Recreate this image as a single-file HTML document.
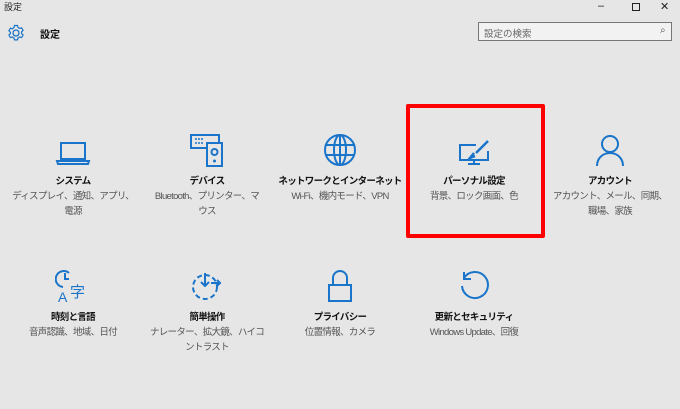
<!DOCTYPE html>
<html><head><meta charset="utf-8"><style>
body{margin:0;width:680px;height:409px;background:#e6e6e6;font-family:"Liberation Sans","Noto Sans CJK JP",sans-serif;position:relative;overflow:hidden;}
.a{position:absolute}
.item{position:absolute;width:134px;text-align:center;white-space:nowrap;letter-spacing:-0.7px}
.item svg{display:block;margin:0 auto;}
.t{font-size:9.5px;color:#111;margin-top:8px;line-height:14px;font-weight:bold}
.s{font-size:9.5px;color:#555;line-height:15px;}
</style></head><body>
<div class="a" style="left:4px;top:0px;font-size:9px;color:#222">設定</div>
<div class="a" style="left:598px;top:0px;font-size:11px;color:#222">–</div>
<div class="a" style="left:632px;top:3px;width:6px;height:6px;border:1px solid #222"></div>
<div class="a" style="left:660px;top:0px;font-size:11px;color:#222">✕</div>
<svg class="a" style="left:7px;top:24px" width="18" height="18" viewBox="0 0 18 18"><circle cx="9" cy="9" r="3" fill="none" stroke="#1a74c9" stroke-width="1.3"/><path d="M7.5 1.5h3l.5 2 1.6.9 2-.6 1.5 2.6-1.5 1.4v1.8l1.5 1.4-1.5 2.6-2-.6-1.6.9-.5 2h-3l-.5-2-1.6-.9-2 .6-1.5-2.6 1.5-1.4V8.2L1.9 6.8l1.5-2.6 2 .6L7 3.5z" fill="none" stroke="#1a74c9" stroke-width="1.2"/></svg>
<div class="a" style="left:40px;top:26px;font-size:10px;font-weight:bold;color:#111">設定</div>
<div class="a" style="left:478px;top:22px;width:194px;height:19px;border:1px solid #777;background:#f2f2f2;box-sizing:border-box"></div>
<div class="a" style="left:484px;top:26px;font-size:9.5px;color:#666">設定の検索</div>
<div class="a" style="left:660px;top:25px;font-size:10px;color:#555">⌕</div>

<div class="item" style="left:6px;top:137px"><svg width="36" height="30" viewBox="0 0 36 30"><path d="M6 6h24v16H6z M2 24h32l-1 3H3z" fill="none" stroke="#1a74c9" stroke-width="2"/></svg><div class="t">システム</div><div class="s">ディスプレイ、通知、アプリ、<br>電源</div></div>
<div class="item" style="left:140px;top:133px"><svg width="36" height="34" viewBox="0 0 36 34"><rect x="2" y="2" width="28" height="13" fill="none" stroke="#1a74c9" stroke-width="2"/><rect x="18" y="10" width="15" height="23" fill="#e6e6e6" stroke="#1a74c9" stroke-width="2"/><circle cx="25.5" cy="19" r="3" fill="none" stroke="#1a74c9" stroke-width="2"/><circle cx="25.5" cy="28" r="1.5" fill="#1a74c9"/><path d="M6 6h9M6 10h8" stroke="#1a74c9" stroke-width="1.5" stroke-dasharray="2 1"/></svg><div class="t">デバイス</div><div class="s">Bluetooth、プリンター、マ<br>ウス</div></div>
<div class="item" style="left:273px;top:133px"><svg width="36" height="34" viewBox="0 0 36 34"><circle cx="18" cy="17" r="15" fill="none" stroke="#1a74c9" stroke-width="2"/><ellipse cx="18" cy="17" rx="6" ry="15" fill="none" stroke="#1a74c9" stroke-width="2"/><path d="M3 12h30M3 22h30M18 2v30" stroke="#1a74c9" stroke-width="2"/></svg><div class="t">ネットワークとインターネット</div><div class="s">Wi-Fi、機内モード、VPN</div></div>
<div class="item" style="left:407px;top:139px"><svg width="36" height="28" viewBox="0 0 36 28"><path d="M20 6H4v15h28V12M18 21v4M12 25h12" fill="none" stroke="#1a74c9" stroke-width="2"/><path d="M32 2L20 14M18 14l-4 5 5-2" fill="none" stroke="#1a74c9" stroke-width="2.5"/></svg><div class="t">パーソナル設定</div><div class="s">背景、ロック画面、色</div></div>
<div class="item" style="left:543px;top:133px"><svg width="36" height="34" viewBox="0 0 36 34"><circle cx="18" cy="11" r="8" fill="none" stroke="#1a74c9" stroke-width="2"/><path d="M5 33c0-8 6-13 13-13s13 5 13 13" fill="none" stroke="#1a74c9" stroke-width="2"/></svg><div class="t">アカウント</div><div class="s">アカウント、メール、同期、<br>職場、家族</div></div>

<div class="item" style="left:6px;top:269px"><svg width="36" height="34" viewBox="0 0 36 34"><path d="M14 4a8 8 0 1 0-6 14" fill="none" stroke="#1a74c9" stroke-width="2"/><path d="M10 4v6h4" fill="none" stroke="#1a74c9" stroke-width="2"/><text x="3" y="33" font-size="14" fill="#1a74c9" font-family="Liberation Sans">A</text><text x="15" y="28" font-size="15" fill="#1a74c9" font-family="Noto Sans CJK JP">字</text></svg><div class="t">時刻と言語</div><div class="s">音声認識、地域、日付</div></div>
<div class="item" style="left:140px;top:269px"><svg width="36" height="34" viewBox="0 0 36 34"><circle cx="16" cy="18" r="12" fill="none" stroke="#1a74c9" stroke-width="2" stroke-dasharray="5 3"/><path d="M16 4v13M12 13l4 4 4-4M22 14h9M28 11l3 3-3 3" fill="none" stroke="#1a74c9" stroke-width="2"/></svg><div class="t">簡単操作</div><div class="s">ナレーター、拡大鏡、ハイコ<br>ントラスト</div></div>
<div class="item" style="left:273px;top:269px"><svg width="36" height="34" viewBox="0 0 36 34"><path d="M11 16V9a7 7 0 0 1 14 0v7" fill="none" stroke="#1a74c9" stroke-width="2"/><rect x="7" y="16" width="22" height="16" fill="none" stroke="#1a74c9" stroke-width="2"/></svg><div class="t">プライバシー</div><div class="s">位置情報、カメラ</div></div>
<div class="item" style="left:407px;top:269px"><svg width="36" height="34" viewBox="0 0 36 34"><path d="M8 9a13 13 0 1 1-2 8" fill="none" stroke="#1a74c9" stroke-width="2"/><path d="M8 3v7h7" fill="none" stroke="#1a74c9" stroke-width="2"/></svg><div class="t">更新とセキュリティ</div><div class="s">Windows Update、回復</div></div>

<div class="a" style="left:406px;top:104px;width:139px;height:134px;border:4px solid #f00;box-sizing:border-box;border-radius:2px"></div>
</body></html>
